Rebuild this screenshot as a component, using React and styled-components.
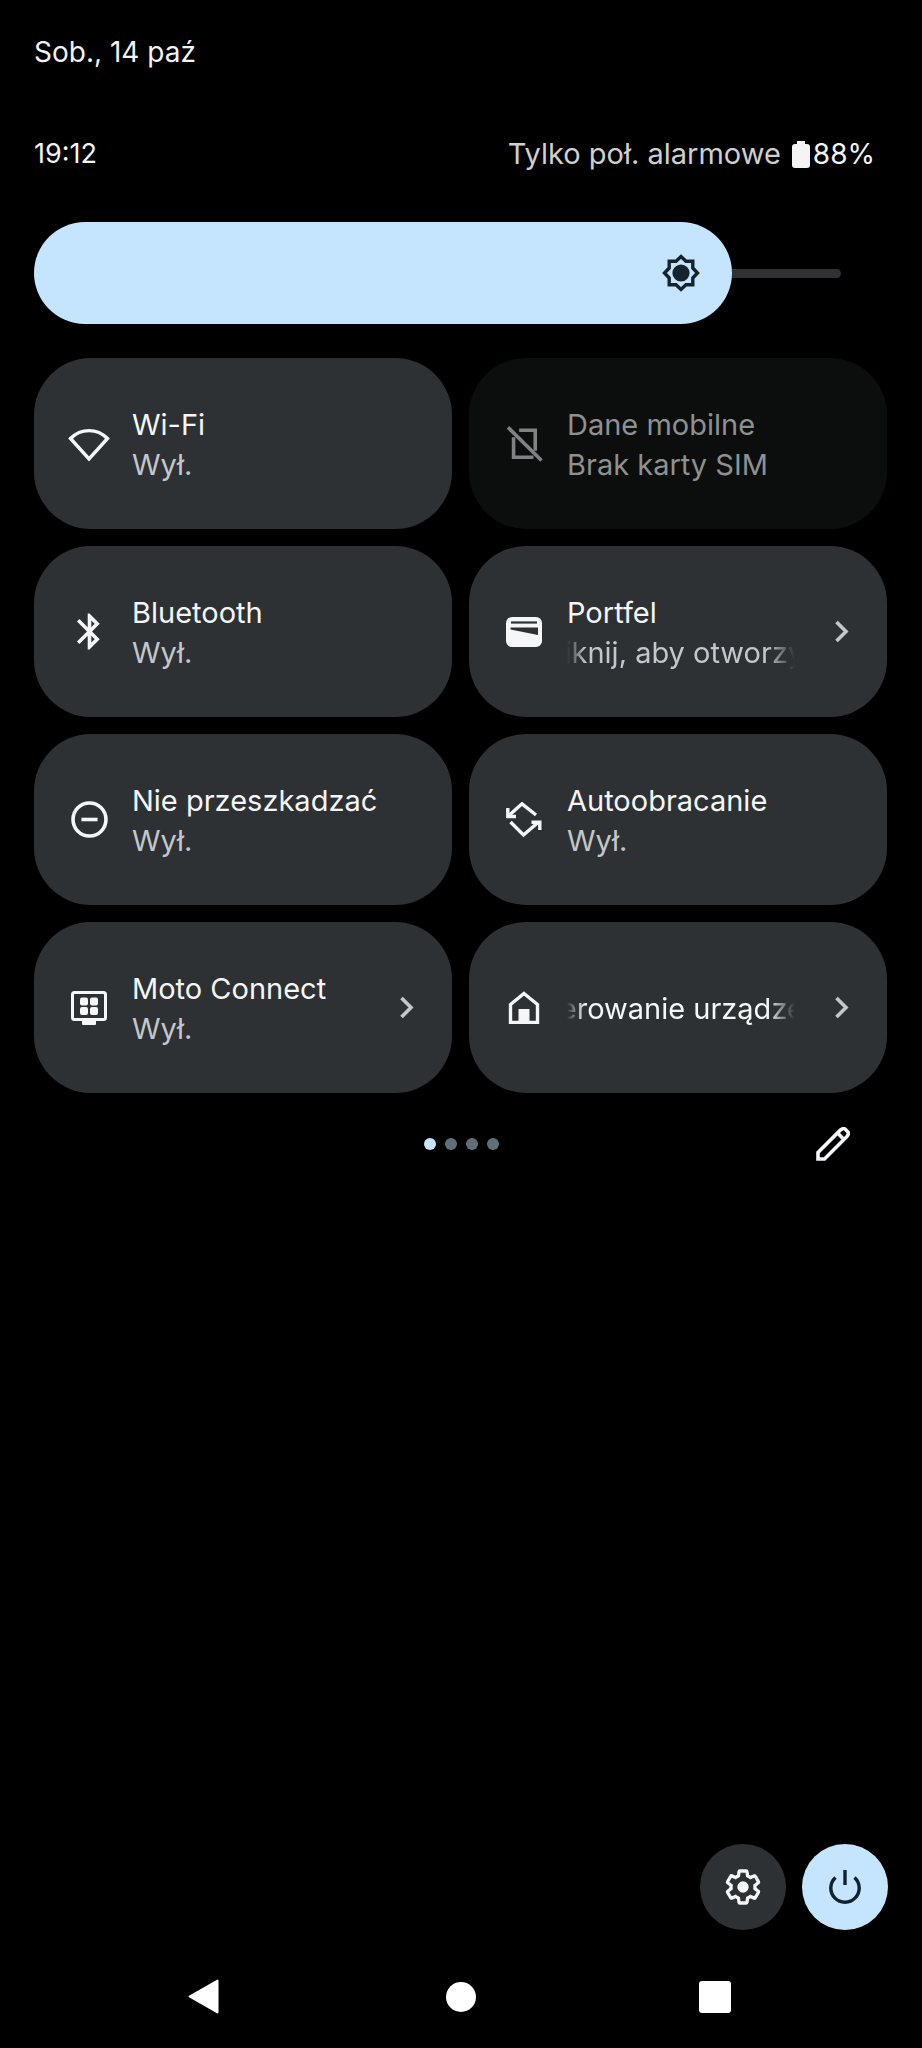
import React from 'react';
import styled, { createGlobalStyle } from 'styled-components';

const GlobalStyle = createGlobalStyle`
  html, body {
    margin: 0;
    padding: 0;
    background: #000;
  }
  * {
    box-sizing: border-box;
  }
`;

const Page = styled.div`
  width: 922px;
  height: 2048px;
  background: #000;
  color: #fff;
  font-family: Inter, "Noto Sans", sans-serif;
  display: flex;
  flex-direction: column;
  overflow: hidden;
`;

const DateRow = styled.div`
  height: 34px;
  margin: 35px 34px 0;
  font-size: 28px;
  line-height: 34px;
  color: #f4f4f4;
`;

const StatusRow = styled.div`
  height: 34px;
  margin: 68px 47px 0 34px;
  display: flex;
  align-items: center;
  justify-content: space-between;
  font-size: 27px;
  line-height: 34px;
  color: #f4f4f4;
`;

const StatusRight = styled.div`
  display: flex;
  align-items: center;
  font-size: 28px;
`;

const AlarmText = styled.span`
  color: #cfcfcf;
  margin-right: 11px;
  font-size: 29px;
`;

const Battery = styled.span`
  position: relative;
  width: 18px;
  height: 24px;
  margin: 3px 3px 0 0;
  background: #f4f4f4;
  border-radius: 3px;

  &::before {
    content: '';
    position: absolute;
    top: -3px;
    left: 5px;
    width: 8px;
    height: 3px;
    background: #f4f4f4;
  }
`;

const SliderRow = styled.div`
  margin: 51px 0 0 34px;
  display: flex;
  align-items: center;
`;

const SliderFill = styled.div`
  width: 698px;
  height: 102px;
  border-radius: 51px;
  background: #c5e5fe;
  display: flex;
  align-items: center;
  justify-content: flex-end;
  padding-right: 31px;
`;

const SliderTrack = styled.div`
  width: 109px;
  height: 9px;
  background: #2e3234;
  border-radius: 0 5px 5px 0;
`;

const TileGrid = styled.div`
  margin: 34px 35px 0 34px;
  display: grid;
  grid-template-columns: 418px 418px;
  grid-auto-rows: 171px;
  column-gap: 17px;
  row-gap: 17px;
`;

const Tile = styled.div`
  border-radius: 57px;
  background: ${(p) => (p.$disabled ? '#0c0e0e' : '#2e3133')};
  display: flex;
  align-items: center;
  padding: 0 34px 0 33px;
`;

const TileIcon = styled.div`
  width: 44px;
  height: 44px;
  flex: none;
  margin-right: 21px;
  display: flex;
  align-items: center;
  justify-content: center;
  color: ${(p) => (p.$disabled ? '#7e8282' : '#f4f6f7')};
`;

const TileText = styled.div`
  width: 228px;
  min-width: 0;
  flex: none;
  font-size: 29px;
  line-height: 40px;
  padding-top: 2px;
`;

const TileTitle = styled.div`
  white-space: nowrap;
  color: ${(p) => (p.$disabled ? '#8e9192' : '#f4f6f7')};
`;

const TileSub = styled.div`
  white-space: nowrap;
  color: ${(p) => (p.$disabled ? '#8e9192' : '#c3c7cb')};
`;

const Marquee = styled.div`
  overflow: hidden;
  white-space: nowrap;
  color: ${(p) => p.$color};
  -webkit-mask-image: linear-gradient(90deg, transparent 0, #000 18px, #000 200px, transparent 228px);
  mask-image: linear-gradient(90deg, transparent 0, #000 18px, #000 200px, transparent 228px);
`;

const MarqueeInner = styled.span`
  display: inline-block;
  margin-left: ${(p) => p.$shift}px;
`;

const Chevron = styled.div`
  margin-left: auto;
  width: 20px;
  margin-right: 2px;
  display: flex;
  justify-content: center;
  color: #c4c7c9;
`;

const PagerRow = styled.div`
  margin: 34px 0 0;
  height: 34px;
  display: flex;
  align-items: center;
  position: relative;
  justify-content: center;
  gap: 9px;
`;

const Dot = styled.span`
  width: 12px;
  height: 12px;
  border-radius: 50%;
  background: ${(p) => (p.$active ? '#c5e5fe' : '#5f6f7a')};
`;

const EditButton = styled.div`
  position: absolute;
  right: 72px;
  top: 0;
  width: 34px;
  height: 34px;
  color: #f4f6f7;
`;

const Actions = styled.div`
  margin-top: auto;
  padding-right: 34px;
  display: flex;
  justify-content: flex-end;
  gap: 16px;
`;

const RoundButton = styled.div`
  width: 86px;
  height: 86px;
  border-radius: 50%;
  display: flex;
  align-items: center;
  justify-content: center;
  background: ${(p) => (p.$primary ? '#c5e5fe' : '#2e3133')};
  color: ${(p) => (p.$primary ? '#0f2230' : '#f4f6f7')};
`;

const NavBar = styled.div`
  margin-top: 49px;
  height: 35px;
  margin-bottom: 34px;
  padding: 0 191px 0 188px;
  display: flex;
  align-items: center;
  justify-content: space-between;
`;

const NavCircle = styled.span`
  width: 30px;
  height: 30px;
  margin-left: 4px;
  border-radius: 50%;
  background: #fff;
`;

const NavSquare = styled.span`
  width: 32px;
  height: 32px;
  border-radius: 3px;
  background: #fff;
`;

const Icon24 = ({ children, size = 43 }) => (
  <svg width={size} height={size} viewBox="0 0 24 24" fill="none" stroke="currentColor" strokeWidth="2">
    {children}
  </svg>
);

const WifiIcon = () => (
  <svg width="42" height="36" viewBox="0 0 42 36" fill="none" stroke="currentColor" strokeWidth="3.4">
    <path d="M2.5 12.5C13 2 29 2 39.5 12.5L21 33Z" />
  </svg>
);

const BluetoothIcon = () => (
  <Icon24>
    <path
      stroke="none"
      fill="currentColor"
      d="M17.71 7.71L12 2h-1v7.59L6.41 5 5 6.41 10.59 12 5 17.59 6.41 19 11 14.41V22h1l5.71-5.71-4.3-4.29 4.3-4.29zM13 5.83l1.88 1.88L13 9.59V5.83zm1.88 10.46L13 18.17v-3.76l1.88 1.88z"
    />
  </Icon24>
);

const NoSimIcon = () => (
  <Icon24>
    <path d="M9 4.6H18V16" />
    <path d="M5.9 8.5V19.7H17" />
    <path d="M2.8 3L21.5 21.5" />
  </Icon24>
);

const WalletIcon = () => (
  <svg width="36" height="30" viewBox="0 0 36 30">
    <rect width="36" height="30" rx="6" fill="currentColor" />
    <path d="M5 5.5H31" stroke="#2e3133" strokeWidth="2.2" fill="none" />
    <path d="M4.5 10.5H32V18L4.5 12.5Z" fill="#2e3133" />
  </svg>
);

const DndIcon = () => (
  <Icon24>
    <circle cx="12" cy="12" r="9.2" />
    <path d="M7.5 12H16.5" />
  </Icon24>
);

const RotateIcon = () => (
  <svg width="36" height="36" viewBox="0 0 36 36" fill="none" stroke="currentColor" strokeWidth="3.4">
    <path d="M3.5 13L16 1.8L30 13" />
    <path d="M1.8 6V14.5H10" />
    <path d="M4.5 20L17.5 33L32 20.5" />
    <path d="M25.5 20.2H33.8V28" />
  </svg>
);

const MotoIcon = () => (
  <svg width="36" height="34" viewBox="0 0 36 34" fill="none">
    <rect x="1.5" y="1.5" width="33" height="27" rx="2" stroke="currentColor" strokeWidth="3" />
    <rect x="11" y="28" width="14" height="6" rx="1" fill="currentColor" />
    <g fill="currentColor">
      <rect x="9" y="6.5" width="8" height="8" rx="2" />
      <rect x="19" y="6.5" width="8" height="8" rx="2" />
      <rect x="9" y="16" width="8" height="8" rx="2" />
      <rect x="19" y="16" width="8" height="8" rx="2" />
    </g>
  </svg>
);

const HomeIcon = () => (
  <svg width="32" height="33" viewBox="0 0 32 33" fill="none">
    <path d="M16 2.5L29.5 13.5V31.5H2.5V13.5Z" stroke="currentColor" strokeWidth="3.4" />
    <rect x="10.5" y="18" width="11" height="13" fill="currentColor" />
  </svg>
);

const ChevronIcon = () => (
  <svg width="15" height="23" viewBox="0 0 15 23" fill="none" stroke="currentColor" strokeWidth="3.6">
    <path d="M2.5 2L12 11.5L2.5 21" />
  </svg>
);

const PencilIcon = () => (
  <svg width="34" height="34" viewBox="0 0 34 34" fill="none" stroke="currentColor" strokeWidth="3.6">
    <path d="M2 32V25.5L24.5 3L26.5 1.8C27.5 1.3 28.5 1.5 29.3 2.3L31.7 4.7C32.5 5.5 32.7 6.5 32.2 7.5L31 9.5L8.5 32Z" />
    <path d="M22 6.5L27.5 12" />
  </svg>
);

const BrightnessIcon = () => (
  <svg width="40" height="40" viewBox="0 0 40 40" fill="none">
    <path
      d="M20 3.5L25 8.2H31.8V15L36.5 20L31.8 25V31.8H25L20 36.5L15 31.8H8.2V25L3.5 20L8.2 15V8.2H15Z"
      stroke="#14232e"
      strokeWidth="3.4"
    />
    <circle cx="20" cy="20" r="8.6" fill="#14232e" />
  </svg>
);

const GearIcon = () => (
  <Icon24 size={40}>
    <path
      strokeWidth="2"
      d="M19.14 12.94c.04-.3.06-.61.06-.94 0-.32-.02-.64-.07-.94l2.03-1.58c.18-.14.23-.41.12-.61l-1.92-3.32c-.12-.22-.37-.29-.59-.22l-2.39.96c-.5-.38-1.03-.7-1.62-.94l-.36-2.54c-.04-.24-.24-.41-.48-.41h-3.84c-.24 0-.43.17-.47.41l-.36 2.54c-.59.24-1.13.57-1.62.94l-2.39-.96c-.22-.08-.47 0-.59.22L2.74 8.87c-.12.21-.08.47.12.61l2.03 1.58c-.05.3-.09.63-.09.94s.02.64.07.94l-2.03 1.58c-.18.14-.23.41-.12.61l1.92 3.32c.12.22.37.29.59.22l2.39-.96c.5.38 1.03.7 1.62.94l.36 2.54c.05.24.24.41.48.41h3.84c.24 0 .44-.17.47-.41l.36-2.54c.59-.24 1.13-.56 1.62-.94l2.39.96c.22.08.47 0 .59-.22l1.92-3.32c.12-.22.07-.47-.12-.61l-2.01-1.58z"
    />
    <circle cx="12" cy="12" r="3.4" fill="currentColor" stroke="none" />
  </Icon24>
);

const PowerIcon = () => (
  <svg width="32" height="34" viewBox="0 0 32 34" fill="none" stroke="currentColor" strokeWidth="3.4">
    <path d="M16 0V15" />
    <path d="M6.5 7.5A14.2 14.2 0 1 0 25.5 7.5" />
  </svg>
);

const BackIcon = () => (
  <svg width="31" height="35" viewBox="0 0 31 35" fill="#fff" stroke="#fff" strokeWidth="2" strokeLinejoin="round">
    <path d="M1.5 17.5L29.5 1.5V33.5Z" />
  </svg>
);

const tiles = [
  { id: 'wifi', title: 'Wi-Fi', sub: 'Wył.', icon: <WifiIcon /> },
  { id: 'data', title: 'Dane mobilne', sub: 'Brak karty SIM', icon: <NoSimIcon />, disabled: true },
  { id: 'bt', title: 'Bluetooth', sub: 'Wył.', icon: <BluetoothIcon /> },
  { id: 'wallet', title: 'Portfel', subMarquee: 'Kliknij, aby otworzyć', shift: -29, icon: <WalletIcon />, chevron: true },
  { id: 'dnd', title: 'Nie przeszkadzać', sub: 'Wył.', icon: <DndIcon /> },
  { id: 'rotate', title: 'Autoobracanie', sub: 'Wył.', icon: <RotateIcon /> },
  { id: 'moto', title: 'Moto Connect', sub: 'Wył.', icon: <MotoIcon />, chevron: true },
  { id: 'home', titleMarquee: 'Sterowanie urządzeniami', shift: -35, icon: <HomeIcon />, chevron: true },
];

const App = () => (
  <Page>
    <GlobalStyle />
    <DateRow>Sob., 14 paź</DateRow>
    <StatusRow>
      <span>19:12</span>
      <StatusRight>
        <AlarmText>Tylko poł. alarmowe</AlarmText>
        <Battery />
        <span>88%</span>
      </StatusRight>
    </StatusRow>
    <SliderRow>
      <SliderFill>
        <BrightnessIcon />
      </SliderFill>
      <SliderTrack />
    </SliderRow>
    <TileGrid>
      {tiles.map((t) => (
        <Tile key={t.id} $disabled={t.disabled}>
          <TileIcon $disabled={t.disabled}>{t.icon}</TileIcon>
          <TileText>
            {t.title && <TileTitle $disabled={t.disabled}>{t.title}</TileTitle>}
            {t.sub && <TileSub $disabled={t.disabled}>{t.sub}</TileSub>}
            {t.subMarquee && (
              <Marquee $color="#c3c7cb">
                <MarqueeInner $shift={t.shift}>{t.subMarquee}</MarqueeInner>
              </Marquee>
            )}
            {t.titleMarquee && (
              <Marquee $color="#f4f6f7">
                <MarqueeInner $shift={t.shift}>{t.titleMarquee}</MarqueeInner>
              </Marquee>
            )}
          </TileText>
          {t.chevron && (
            <Chevron>
              <ChevronIcon />
            </Chevron>
          )}
        </Tile>
      ))}
    </TileGrid>
    <PagerRow>
      <Dot $active />
      <Dot />
      <Dot />
      <Dot />
      <EditButton>
        <PencilIcon />
      </EditButton>
    </PagerRow>
    <Actions>
      <RoundButton>
        <GearIcon />
      </RoundButton>
      <RoundButton $primary>
        <PowerIcon />
      </RoundButton>
    </Actions>
    <NavBar>
      <BackIcon />
      <NavCircle />
      <NavSquare />
    </NavBar>
  </Page>
);

export default App;
